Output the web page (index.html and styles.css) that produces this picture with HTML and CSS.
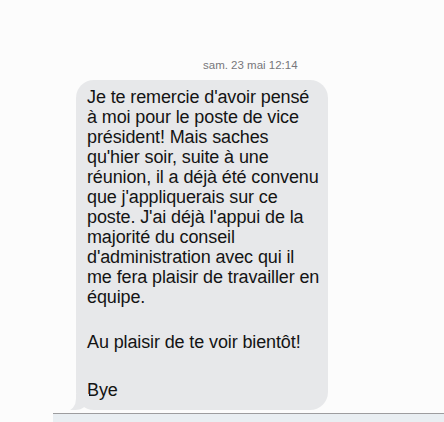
FILE: index.html
```html
<!DOCTYPE html>
<html lang="fr">
<head>
    <meta charset="UTF-8">
    <meta name="viewport" content="width=device-width, initial-scale=1.0">
    <title>Messages</title>
    <link rel="stylesheet" href="styles.css">
</head>
<body>
    <div class="thread">
        <div class="stamp">sam. 23 mai 12:14</div>

        <div class="bubble">
            <p>Je te remercie d'avoir pensé<br>
            à moi pour le poste de vice<br>
            président! Mais saches<br>
            qu'hier soir, suite à une<br>
            réunion, il a déjà été convenu<br>
            que j'appliquerais sur ce<br>
            poste. J'ai déjà l'appui de la<br>
            majorité du conseil<br>
            d'administration avec qui il<br>
            me fera plaisir de travailler en<br>
            équipe.</p>
            <p class="gap-a">Au plaisir de te voir bientôt!</p>
            <p class="gap-b">Bye</p>
        </div>
    </div>

    <div class="composer"></div>
</body>
</html>
```

FILE: styles.css
```css
* {
    margin: 0;
    padding: 0;
    box-sizing: border-box;
}

body {
    font-family: "Liberation Sans", Arial, Helvetica, sans-serif;
    background: #fcfcfc;
    color: #141414;
    height: 422px;
    overflow: hidden;
}

.thread {
    padding: 59px 0 0 76px;
    height: 413px;
}

.stamp {
    padding-left: 127px;
    font-size: 11.5px;
    line-height: 13px;
    color: #77777b;
}

.bubble {
    position: relative;
    width: 252px;
    margin-top: 8px;
    padding: 7px 8px 10px 11px;
    background: #e7e8ea;
    border-radius: 18px;
    font-size: 18px;
    line-height: 20px;
    letter-spacing: -0.12px;
    white-space: nowrap;
}

/* little tail on the bottom left */
.bubble::before {
    content: "";
    position: absolute;
    left: -7px;
    bottom: 0;
    width: 20px;
    height: 16px;
    background: #e7e8ea;
    border-bottom-right-radius: 14px 12px;
}

.bubble::after {
    content: "";
    position: absolute;
    left: -12px;
    bottom: -1px;
    width: 12px;
    height: 17px;
    background: #fcfcfc;
    border-bottom-right-radius: 10px 12px;
}

.gap-a {
    margin-top: 25px;
}

.gap-b {
    margin-top: 28px;
}

.composer {
    margin-left: 53px;
    height: 9px;
    border-top: 1px solid #9d9d9f;
    background: #e9eef2;
}
```
